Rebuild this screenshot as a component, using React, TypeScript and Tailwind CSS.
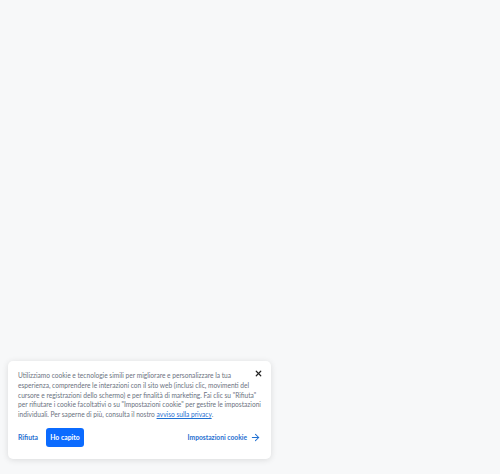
import { X, ArrowRight } from "lucide-react";

const lines = [
  "Utilizziamo cookie e tecnologie simili per migliorare e personalizzare la tua",
  "esperienza, comprendere le interazioni con il sito web (inclusi clic, movimenti del",
  'cursore e registrazioni dello schermo) e per finalità di marketing. Fai clic su "Rifiuta"',
  'per rifiutare i cookie facoltativi o su "Impostazioni cookie" per gestire le impostazioni',
];

export default function App() {
  return (
    <div
      className="w-[500px] h-[474px] bg-[#f7f8f9] flex flex-col justify-end pb-[15px] pl-[8px]"
      style={{ fontFamily: "Lato, 'Noto Sans', sans-serif" }}
    >
      <div className="relative w-[263px] h-[98px] bg-white rounded-[5px] shadow-[0_1px_6px_rgba(0,0,0,0.12)] pt-[10px] px-[10px]">
        <button className="absolute right-[8px] top-[8px] text-[#222]">
          <X size={9} strokeWidth={3.2} />
        </button>
        <p className="text-[6.6px] leading-[9.75px] text-[#6b7280] whitespace-nowrap">
          {lines.map((l) => (
            <span key={l} className="block">
              {l}
            </span>
          ))}
          <span className="block">
            individuali. Per saperne di più, consulta il nostro{" "}
            <a className="text-[#1f6fd1] underline">avviso sulla privacy</a>.
          </span>
        </p>
        <div className="flex items-center mt-[8px]">
          <button className="text-[6.8px] font-bold text-[#1f6fd1]">Rifiuta</button>
          <button className="ml-[8px] w-[38px] h-[19px] rounded-[3px] bg-[#0b6bff] text-white text-[6.8px] font-bold">
            Ho capito
          </button>
          <button className="ml-auto flex items-center gap-[3px] text-[6.7px] font-bold text-[#1f6fd1]">
            Impostazioni cookie
            <ArrowRight size={11} strokeWidth={2.2} />
          </button>
        </div>
      </div>
    </div>
  );
}
